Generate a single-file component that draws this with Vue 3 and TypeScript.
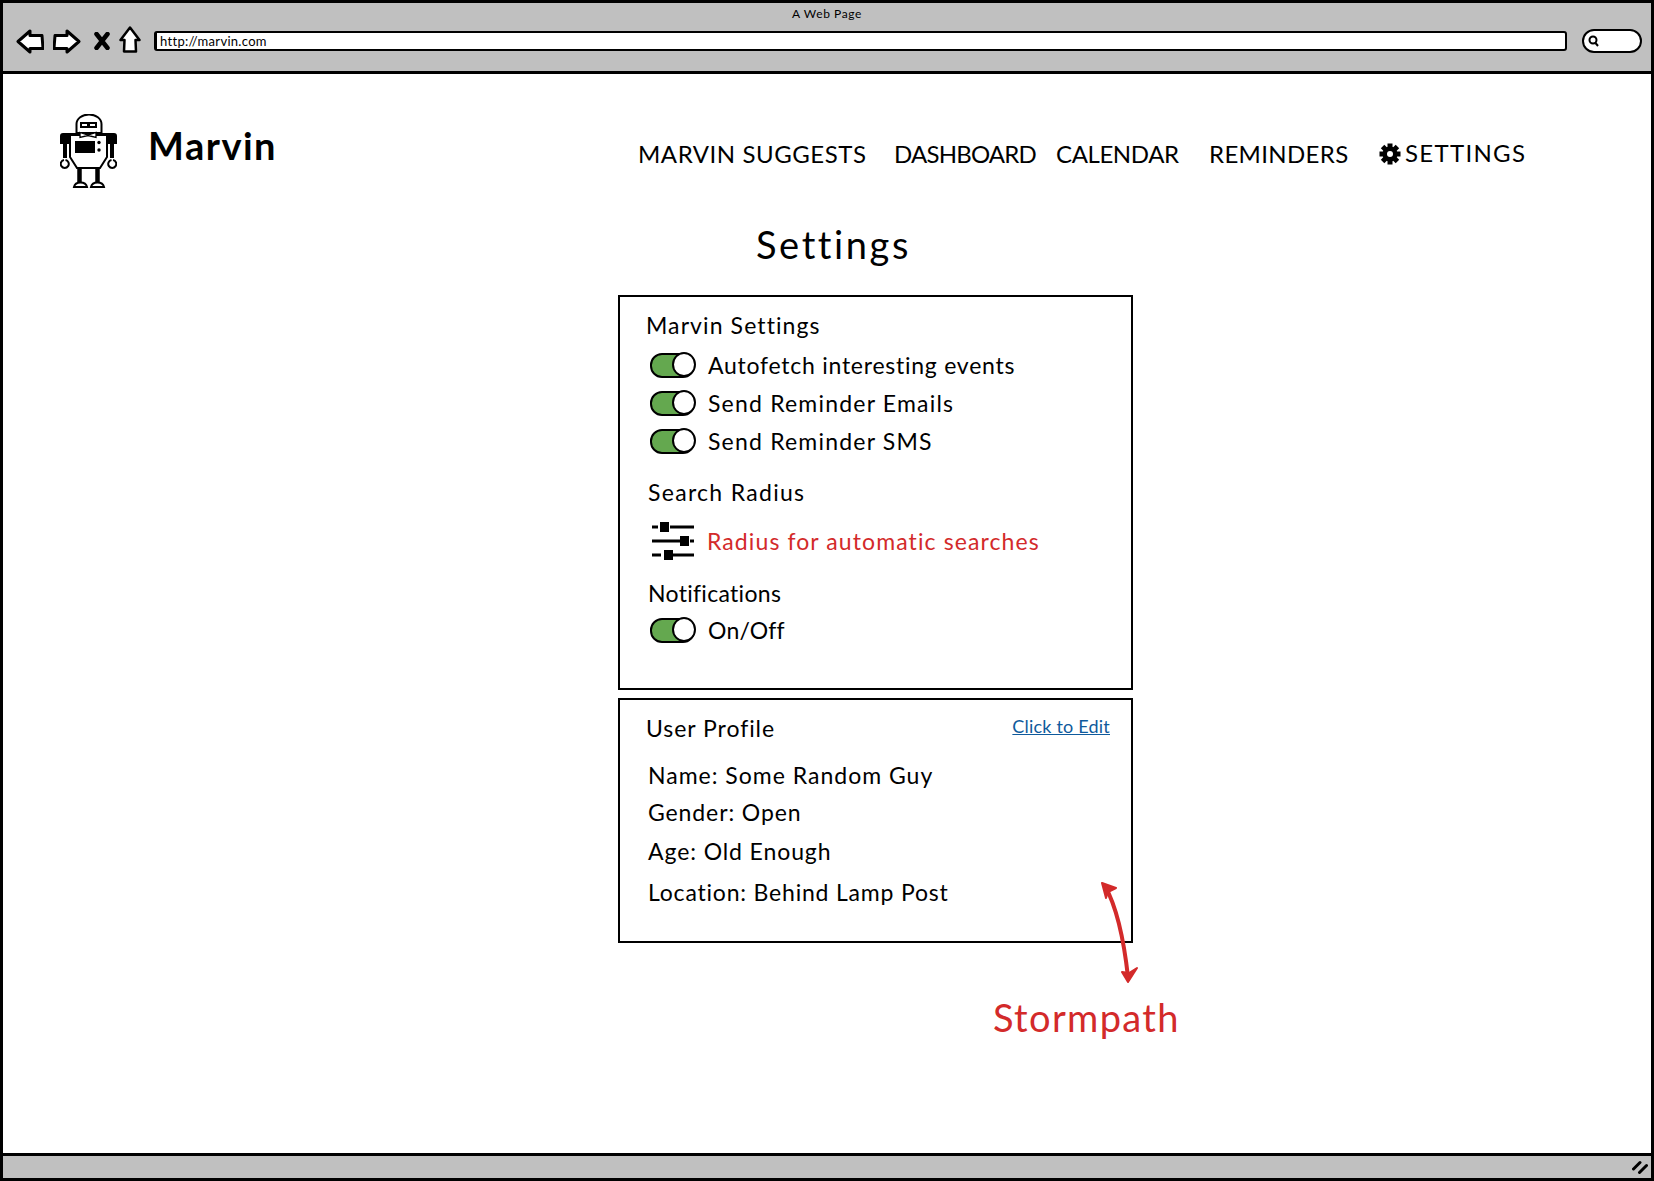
<template>
  <div class="window">
    <header class="chrome">
      <div class="page-title">A Web Page</div>
      <div class="toolbar">
        <svg class="tool tool-back" viewBox="0 0 28 25" width="28" height="25">
          <path d="M2 12.500 14 2v4.500h12l1 13H14V23z" fill="#fff" stroke="#000" stroke-width="3" stroke-linejoin="round" />
        </svg>
        <svg class="tool tool-fwd" viewBox="0 0 28 25" width="28" height="25">
          <path d="M26 12.500 14 2v4.500H2L1 19.500h13V23z" fill="#fff" stroke="#000" stroke-width="3" stroke-linejoin="round" />
        </svg>
        <svg class="tool tool-x" viewBox="0 0 16 18" width="16" height="18">
          <path d="M2.500 2 13.500 16M13.500 2 2.500 16" stroke="#000" stroke-width="4.500" stroke-linecap="round" fill="none" />
        </svg>
        <svg class="tool tool-home" viewBox="0 0 22 27" width="22" height="27">
          <path d="M11 1.500 1.500 14H5.500L5 25.500H17L16.500 14H20.500z" fill="#fff" stroke="#000" stroke-width="2.500" stroke-linejoin="round" />
        </svg>
        <div class="url-bar">http://marvin.com</div>
        <div class="search-pill">
          <svg viewBox="0 0 12 12" width="12" height="12">
            <circle cx="5" cy="5" r="3.500" fill="none" stroke="#000" stroke-width="2" />
            <path d="M7.500 8 10 11" stroke="#000" stroke-width="2" />
          </svg>
        </div>
      </div>
    </header>

    <main class="page">
      <div class="top-row">
        <div class="brand">
          <svg class="robot" viewBox="60 114 57 74" width="57" height="74">
            <path d="M76.500 133v-9a12.500 9.500 0 0 1 25 0v9z" fill="#fff" stroke="#000" stroke-width="2" />
            <rect x="80" y="122" width="17" height="6" fill="#000" />
            <rect x="82" y="124" width="5" height="2" fill="#fff" />
            <rect x="90" y="124" width="5" height="2" fill="#fff" />
            <path d="M60 136q0-3 3-3h51q3 0 3 3v8h-3v14h-4v-14h-43v14h-4v-14h-3z" fill="#000" />
            <path d="M70 135h37v22l-7 11H77l-7-11z" fill="#fff" stroke="#000" stroke-width="2" />
            <path d="M80 132.500l8 2.500 8-2.500v5l-8-2-8 2z" fill="#fff" stroke="#000" stroke-width="1.300" />
            <rect x="75" y="141" width="20" height="12" fill="#000" />
            <circle cx="99" cy="142.500" r="1.700" fill="#000" />
            <circle cx="99" cy="150" r="1.700" fill="#000" />
            <path d="M79.500 168v15M97.500 168v15" stroke="#000" stroke-width="4.500" />
            <path d="M74 187q1-4.500 6.500-4.500t6.500 4.500zM91 187q1-4.500 6.500-4.500t6.500 4.500z" fill="#fff" stroke="#000" stroke-width="2" />
            <path d="M64 160a4 4 0 1 0 1.500 0M113 160a4 4 0 1 1-1.500 0" fill="none" stroke="#000" stroke-width="2" />
          </svg>
          <span class="brand-name">Marvin</span>
        </div>
        <nav class="nav">
          <span>MARVIN SUGGESTS</span>
          <span>DASHBOARD</span>
          <span>CALENDAR</span>
          <span>REMINDERS</span>
          <span class="nav-settings">
            <svg viewBox="0 0 22 22" width="22" height="22">
              <rect v-for="a in gearTeeth" :key="a" x="8.500" y="0.500" width="5" height="21" :transform="`rotate(${a} 11 11)`" fill="#000" />
              <circle cx="11" cy="11" r="7.500" fill="#000" />
              <circle cx="11" cy="11" r="3" fill="#fff" />
            </svg>
            SETTINGS
          </span>
        </nav>
      </div>

      <h1 class="heading">Settings</h1>

      <section class="card card-settings">
        <h2 class="card-title">Marvin Settings</h2>
        <div v-for="label in toggles" :key="label" class="toggle-row">
          <span class="toggle"><span class="knob" /></span>
          <span>{{ label }}</span>
        </div>
        <h3 class="sub-title radius-title">Search Radius</h3>
        <div class="slider-row">
          <svg class="sliders" viewBox="0 0 42 38" width="42" height="38">
            <path d="M0 5h6M18 5h24M0 19h28M38 19h4M0 33h9M21 33h21" stroke="#000" stroke-width="3" />
            <rect x="8" y="0" width="9" height="10" fill="#000" />
            <rect x="28" y="14" width="9" height="10" fill="#000" />
            <rect x="12" y="28" width="9" height="10" fill="#000" />
          </svg>
          <span class="alert">Radius for automatic searches</span>
        </div>
        <h3 class="sub-title notif-title">Notifications</h3>
        <div class="toggle-row onoff-row">
          <span class="toggle"><span class="knob" /></span>
          <span>On/Off</span>
        </div>
      </section>

      <section class="card card-profile">
        <div class="profile-head">
          <h2 class="card-title">User Profile</h2>
          <a class="edit-link">Click to Edit</a>
        </div>
        <p v-for="item in profile" :key="item" class="profile-line">{{ item }}</p>
      </section>

      <div class="stormpath">Stormpath</div>

      <svg class="arrow" viewBox="0 0 40 104" width="40" height="104">
        <path d="M4 4C14 22 22 50 27 95" fill="none" stroke="#d32a2a" stroke-width="4" />
        <path d="M1 1 15 6 7 10 5 16zM21 90 28 91 36 86 27 100z" fill="#d32a2a" stroke="#d32a2a" stroke-width="2" stroke-linejoin="round" />
      </svg>
    </main>

    <footer class="status-bar">
      <svg viewBox="0 0 16 14" width="16" height="14">
        <path d="M1.500 9 8 2.500M7.500 12.500 14.500 5.500" stroke="#000" stroke-width="3" stroke-linecap="round" />
      </svg>
    </footer>
  </div>
</template>

<script setup lang="ts">
const gearTeeth = [0, 45, 90, 135]

const toggles = [
  'Autofetch interesting events',
  'Send Reminder Emails',
  'Send Reminder SMS',
]

const profile = [
  'Name: Some Random Guy',
  'Gender: Open',
  'Age: Old Enough',
  'Location: Behind Lamp Post',
]
</script>

<style>
html,
body {
  margin: 0;
  background: #fff;
}
</style>

<style scoped>
.window {
  position: relative;
  box-sizing: border-box;
  width: 1654px;
  height: 1181px;
  border: 3px solid #000;
  display: flex;
  flex-direction: column;
  overflow: hidden;
  font-family: Lato, "Liberation Sans", sans-serif;
  color: #000;
  background: #fff;
}

.chrome {
  box-sizing: border-box;
  height: 71px;
  background: #c0c0c0;
  border-bottom: 3px solid #000;
}

.page-title {
  height: 20px;
  line-height: 22px;
  text-align: center;
  font-size: 12px;
  letter-spacing: 0.6px;
}

.toolbar {
  display: flex;
  align-items: center;
  height: 36px;
  padding-left: 13px;
}

.tool {
  flex: none;
}

.tool-fwd {
  margin-left: 9px;
}

.tool-x {
  margin-left: 13px;
}

.tool-home {
  margin-left: 9px;
  margin-top: -3px;
}

.url-bar {
  box-sizing: border-box;
  flex: none;
  width: 1413px;
  height: 20px;
  margin-left: 13px;
  padding-left: 3px;
  background: #fff;
  border: 2px solid #000;
  border-left-width: 3px;
  border-radius: 3px;
  font-size: 13px;
  line-height: 16px;
  letter-spacing: 0.3px;
}

.search-pill {
  box-sizing: border-box;
  flex: none;
  display: flex;
  align-items: center;
  width: 60px;
  height: 24px;
  margin-left: 15px;
  padding-left: 4px;
  background: #fff;
  border: 2px solid #000;
  border-radius: 12px;
}

.page {
  position: relative;
  flex: 1;
  min-height: 0;
}

.top-row {
  display: flex;
  height: 116px;
}

.brand {
  display: flex;
  align-items: flex-start;
  width: 635px;
  padding-left: 57px;
  box-sizing: border-box;
}

.robot {
  flex: none;
  margin-top: 40px;
}

.brand-name {
  margin-left: 31px;
  margin-top: 48px;
  font-size: 38px;
  font-weight: 700;
  line-height: 46px;
  letter-spacing: 1.500px;
}

.nav {
  display: grid;
  grid-template-columns: 256px 162px 153px 170px auto;
  align-content: start;
  padding-top: 63px;
  font-size: 24px;
  line-height: 34px;
  white-space: nowrap;
}

.nav span:nth-child(1) {
  letter-spacing: 0.55px;
}

.nav span:nth-child(2) {
  letter-spacing: -0.8px;
}

.nav span:nth-child(3) {
  letter-spacing: -0.4px;
}

.nav span:nth-child(4) {
  letter-spacing: 0.35px;
}

.nav-settings {
  display: flex;
  align-items: center;
  gap: 4px;
  margin-top: -2px;
  letter-spacing: 1.300px;
}

.nav-settings svg {
  margin-top: 2px;
}

.heading {
  margin: 0 0 0 753px;
  height: 105px;
  font-size: 38px;
  font-weight: 400;
  line-height: 50px;
  padding-top: 29px;
  box-sizing: border-box;
  letter-spacing: 2.600px;
}

.card {
  box-sizing: border-box;
  width: 515px;
  margin-left: 615px;
  border: 2px solid #000;
  font-size: 23px;
  letter-spacing: 0.9px;
  background: #fff;
}

.card-settings {
  height: 395px;
  padding: 13px 0 0 26px;
}

.card-profile {
  height: 245px;
  margin-top: 8px;
  padding: 13px 21px 0 26px;
}

.card-title {
  margin: 0;
  font-size: 23px;
  font-weight: 400;
  line-height: 30px;
  letter-spacing: 1.100px;
}

.toggle-row {
  display: flex;
  align-items: center;
  height: 38px;
  gap: 13px;
  margin-left: 4px;
  letter-spacing: 1.200px;
}

.card-title + .toggle-row {
  margin-top: 6px;
  letter-spacing: 0.750px;
}

.toggle {
  box-sizing: border-box;
  display: flex;
  justify-content: flex-end;
  width: 45px;
  height: 25px;
  background: #64a84f;
  border: 2.500px solid #000;
  border-radius: 12px;
}

.knob {
  box-sizing: border-box;
  width: 24px;
  height: 25px;
  margin: -2.500px;
  background: #fff;
  border: 2.500px solid #000;
  border-radius: 50%;
}

.sub-title {
  margin: 0 0 0 2px;
  font-size: 23px;
  font-weight: 400;
  line-height: 30px;
  letter-spacing: 1.300px;
}

.radius-title {
  margin-top: 17px;
}

.slider-row {
  display: flex;
  align-items: center;
  height: 38px;
  gap: 13px;
  margin: 15px 0 0 6px;
}

.sliders {
  flex: none;
}

.alert {
  color: #d32a2a;
  letter-spacing: 1.100px;
}

.notif-title {
  margin-top: 18px;
  letter-spacing: 0.3px;
}

.onoff-row {
  margin-top: 3px;
  letter-spacing: 0.2px;
}

.profile-head {
  display: flex;
  justify-content: space-between;
  align-items: flex-start;
}

.card-profile .card-title {
  letter-spacing: 0.950px;
}

.edit-link {
  font-size: 18px;
  line-height: 26px;
  color: #0f5a9c;
  text-decoration: underline;
  letter-spacing: 0.2px;
}

.profile-line {
  margin: 0 0 0 2px;
  height: 38px;
  line-height: 38px;
}

.profile-head + .profile-line {
  margin-top: 13px;
  letter-spacing: 1px;
}

.profile-line:nth-of-type(2) {
  margin-top: -1px;
}

.profile-line:nth-of-type(3) {
  margin-top: 1px;
}

.profile-line:nth-of-type(4) {
  margin-top: 3px;
  letter-spacing: 0.8px;
}

.stormpath {
  margin: 51px 0 0 990px;
  font-size: 38px;
  line-height: 46px;
  color: #d32a2a;
  letter-spacing: 1.350px;
}

.arrow {
  position: absolute;
  left: 1098px;
  top: 808px;
}

.status-bar {
  box-sizing: border-box;
  display: flex;
  justify-content: flex-end;
  align-items: center;
  height: 25px;
  padding-right: 3px;
  background: #c0c0c0;
  border-top: 3px solid #000;
}
</style>
